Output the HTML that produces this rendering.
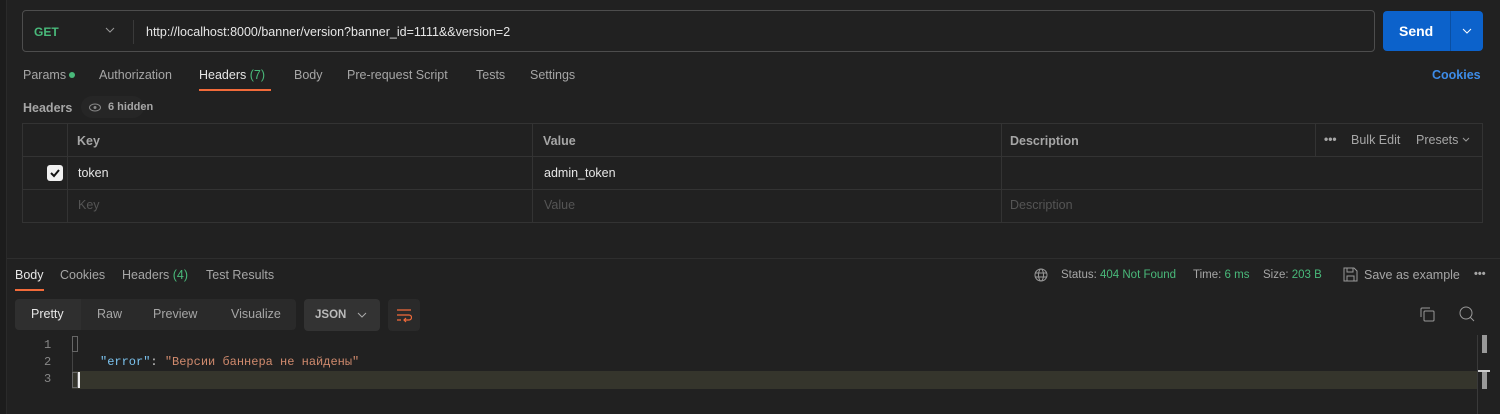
<!DOCTYPE html>
<html><head><meta charset="utf-8"><style>
*{box-sizing:border-box;margin:0;padding:0}
body{width:1500px;height:414px;background:#212121;font-family:"Liberation Sans",sans-serif;font-size:12px;color:#a6a6a6;position:relative;overflow:hidden}
.a{position:absolute;white-space:nowrap}
.g{color:#49b97a}
.w{color:#e6e6e6}
.cell{position:absolute;border-right:1px solid #333;border-bottom:1px solid #333}
</style></head><body>
<div class="a" style="left:0;top:0;width:7px;height:414px;background:#1c1c1c;border-right:1px solid #2a2a2a"></div>
<div class="a" style="left:22px;top:10px;width:1353px;height:42px;border:1px solid #4d4d4d;border-radius:4px;background:#212121"></div>
<div class="a" style="left:34px;top:25px;color:#49b97a;font-weight:bold;font-size:12px">GET</div>
<svg class="a" style="left:105px;top:27px" width="10" height="7"><path d="M1 1l4 4 4-4" stroke="#999" fill="none"/></svg>
<div class="a" style="left:133px;top:20px;width:1px;height:24px;background:#3a3a3a"></div>
<div class="a w" style="left:146px;top:25px;font-size:12.5px">http://localhost:8000/banner/version?banner_id=1111&amp;&amp;version=2</div>
<div class="a" style="left:1383px;top:11px;width:100px;height:40px;background:#0c62cb;border-radius:4px"></div>
<div class="a" style="left:1450px;top:11px;width:1px;height:40px;background:#0a4fa3"></div>
<div class="a" style="left:1399px;top:23px;color:#fff;font-weight:bold;font-size:14px">Send</div>
<svg class="a" style="left:1462px;top:28px" width="10" height="7"><path d="M1 1l4 4 4-4" stroke="#fff" fill="none"/></svg>
<div class="a" style="left:23px;top:68px;font-size:12.5px">Params</div>
<div class="a" style="left:69px;top:72px;width:6px;height:6px;border-radius:3px;background:#49b97a"></div>
<div class="a" style="left:99px;top:68px;font-size:12.5px">Authorization</div>
<div class="a w" style="left:199px;top:68px;font-size:12.5px">Headers <span class="g">(7)</span></div>
<div class="a" style="left:199px;top:89px;width:72px;height:2px;background:#f26b3a"></div>
<div class="a" style="left:294px;top:68px;font-size:12.5px">Body</div>
<div class="a" style="left:347px;top:68px;font-size:12.5px">Pre-request Script</div>
<div class="a" style="left:476px;top:68px;font-size:12.5px">Tests</div>
<div class="a" style="left:530px;top:68px;font-size:12.5px">Settings</div>
<div class="a" style="left:1432px;top:68px;font-size:12.5px;color:#3d8ce8;font-weight:bold">Cookies</div>
<div class="a" style="left:23px;top:101px;font-weight:bold;font-size:12.5px">Headers</div>
<div class="a" style="left:81px;top:96px;width:63px;height:22px;border-radius:11px;background:#262626"></div>
<svg class="a" style="left:89px;top:103px" width="12" height="9"><ellipse cx="6" cy="4.5" rx="5.5" ry="3.5" stroke="#888" fill="none"/><circle cx="6" cy="4.5" r="1.5" fill="#888"/></svg>
<div class="a" style="left:108px;top:101px;font-size:11px;font-weight:bold">6 hidden</div>
<div class="a" style="left:22px;top:123px;width:1461px;height:100px;border:1px solid #333"></div>
<div class="cell" style="left:22px;top:123px;width:46px;height:34px"></div>
<div class="cell" style="left:68px;top:123px;width:465px;height:34px"></div>
<div class="cell" style="left:533px;top:123px;width:469px;height:34px"></div>
<div class="cell" style="left:1002px;top:123px;width:314px;height:34px"></div>
<div class="cell" style="left:1316px;top:123px;width:167px;height:34px;border-right:none"></div>
<div class="cell" style="left:22px;top:157px;width:46px;height:33px"></div>
<div class="cell" style="left:68px;top:157px;width:465px;height:33px"></div>
<div class="cell" style="left:533px;top:157px;width:469px;height:33px"></div>
<div class="cell" style="left:1002px;top:157px;width:481px;height:33px;border-right:none"></div>
<div class="cell" style="left:22px;top:190px;width:46px;height:33px;border-bottom:none"></div>
<div class="cell" style="left:68px;top:190px;width:465px;height:33px;border-bottom:none"></div>
<div class="cell" style="left:533px;top:190px;width:469px;height:33px;border-bottom:none"></div>
<div class="a" style="left:77px;top:134px;font-weight:bold;font-size:12.5px">Key</div>
<div class="a" style="left:543px;top:134px;font-weight:bold;font-size:12.5px">Value</div>
<div class="a" style="left:1010px;top:134px;font-weight:bold;font-size:12.5px">Description</div>
<div class="a" style="left:1324px;top:132px;font-weight:bold;font-size:12px">•••</div>
<div class="a" style="left:1351px;top:133px;font-size:12.5px">Bulk Edit</div>
<div class="a" style="left:1416px;top:133px;font-size:12.5px">Presets</div>
<svg class="a" style="left:1462px;top:137px" width="8" height="6"><path d="M1 1l3 3 3-3" stroke="#999" fill="none"/></svg>
<div class="a" style="left:47px;top:165px;width:16px;height:16px;background:#f0f0f0;border-radius:3px"></div>
<svg class="a" style="left:49px;top:167px" width="12" height="12"><path d="M2 6l3 3 5-6" stroke="#111" stroke-width="2" fill="none"/></svg>
<div class="a w" style="left:78px;top:166px;font-size:12.5px">token</div>
<div class="a w" style="left:544px;top:166px;font-size:12.5px">admin_token</div>
<div class="a" style="left:78px;top:198px;color:#555;font-size:12.5px">Key</div>
<div class="a" style="left:544px;top:198px;color:#555;font-size:12.5px">Value</div>
<div class="a" style="left:1010px;top:198px;color:#555;font-size:12.5px">Description</div>
<div class="a" style="left:7px;top:258px;width:1493px;height:1px;background:#2e2e2e"></div>
<div class="a w" style="left:15px;top:268px;font-size:12.5px">Body</div>
<div class="a" style="left:15px;top:289px;width:29px;height:2px;background:#f26b3a"></div>
<div class="a" style="left:60px;top:268px;font-size:12.5px">Cookies</div>
<div class="a" style="left:122px;top:268px;font-size:12.5px">Headers <span class="g">(4)</span></div>
<div class="a" style="left:206px;top:268px;font-size:12.5px">Test Results</div>
<svg class="a" style="left:1034px;top:268px" width="14" height="14"><circle cx="7" cy="7" r="6" stroke="#999" fill="none"/><ellipse cx="7" cy="7" rx="2.5" ry="6" stroke="#999" fill="none"/><path d="M1 5h12M1 9h12" stroke="#999"/></svg>
<div class="a" style="left:1061px;top:269px;font-size:11.5px">Status: <span class="g">404 Not Found</span></div>
<div class="a" style="left:1193px;top:269px;font-size:11.5px">Time: <span class="g">6 ms</span></div>
<div class="a" style="left:1263px;top:269px;font-size:11.5px">Size: <span class="g">203 B</span></div>
<svg class="a" style="left:1343px;top:267px" width="15" height="15"><path d="M1 1h10l3 3v10H1z" stroke="#999" fill="none"/><path d="M4 1v4h6V1M4 14v-5h7v5" stroke="#999" fill="none"/></svg>
<div class="a" style="left:1364px;top:268px;font-size:12.5px">Save as example</div>
<div class="a" style="left:1474px;top:268px;font-size:11px;font-weight:bold">•••</div>
<div class="a" style="left:15px;top:299px;width:281px;height:31px;background:#2a2a2a;border-radius:4px"></div>
<div class="a" style="left:15px;top:299px;width:66px;height:31px;background:#2f2f2f;border-radius:4px 0 0 4px"></div>
<div class="a w" style="left:31px;top:307px;font-size:12.5px">Pretty</div>
<div class="a" style="left:97px;top:307px;font-size:12.5px">Raw</div>
<div class="a" style="left:153px;top:307px;font-size:12.5px">Preview</div>
<div class="a" style="left:231px;top:307px;font-size:12.5px">Visualize</div>
<div class="a" style="left:304px;top:299px;width:76px;height:32px;background:#333;border-radius:4px"></div>
<div class="a" style="left:315px;top:309px;font-size:11.5px;font-weight:bold;color:#bbb">JSON</div>
<svg class="a" style="left:357px;top:312px" width="10" height="6"><path d="M1 1l4 4 4-4" stroke="#aaa" fill="none"/></svg>
<div class="a" style="left:388px;top:299px;width:32px;height:32px;background:#2a2a2a;border-radius:4px"></div>
<svg class="a" style="left:396px;top:307px" width="16" height="16"><path d="M1 3h14M1 8h12a2.5 2.5 0 0 1 0 5H8M1 13h4" stroke="#f26b3a" fill="none" stroke-width="1.2"/><path d="M10 11l-2 2 2 2" stroke="#f26b3a" fill="none" stroke-width="1.2"/></svg>
<svg class="a" style="left:1420px;top:307px" width="15" height="15"><rect x="4" y="4" width="10" height="10" rx="1" stroke="#999" fill="none"/><path d="M1 10V2a1 1 0 0 1 1-1h8" stroke="#999" fill="none"/></svg>
<svg class="a" style="left:1459px;top:306px" width="16" height="16"><circle cx="7" cy="7" r="6" stroke="#999" fill="none"/><path d="M11 11l4 4" stroke="#999"/></svg>
<div class="a" style="left:72px;top:371px;width:1405px;height:18px;background:#35352c"></div>
<div class="a" style="left:44px;top:337px;font-family:'Liberation Mono',monospace;font-size:12px;line-height:17px;color:#888;text-align:right">1<br>2<br>3</div>
<div class="a" style="left:72px;top:336px;width:6px;height:16px;border:1px solid #666"></div>
<div class="a" style="left:72px;top:372px;width:6px;height:16px;border:1px solid #666"></div>
<div class="a" style="left:72px;top:352px;width:1px;height:20px;background:#444"></div>
<div class="a" style="left:78px;top:372px;width:2px;height:16px;background:#eee"></div>
<div class="a" style="left:100px;top:355px;font-family:'Liberation Mono','DejaVu Sans Mono',monospace;font-size:12px"><span style="color:#7cc4f0">"error"</span><span style="color:#ccc">: </span><span style="color:#d18b6e">"Версии баннера не найдены"</span></div>
<div class="a" style="left:1477px;top:335px;width:1px;height:79px;background:#3a3a3a"></div>
<div class="a" style="left:1482px;top:335px;width:5px;height:18px;background:#999"></div>
<div class="a" style="left:1478px;top:370px;width:12px;height:2px;background:#ccc"></div>
<div class="a" style="left:1482px;top:372px;width:5px;height:17px;background:#999"></div>
</body></html>
